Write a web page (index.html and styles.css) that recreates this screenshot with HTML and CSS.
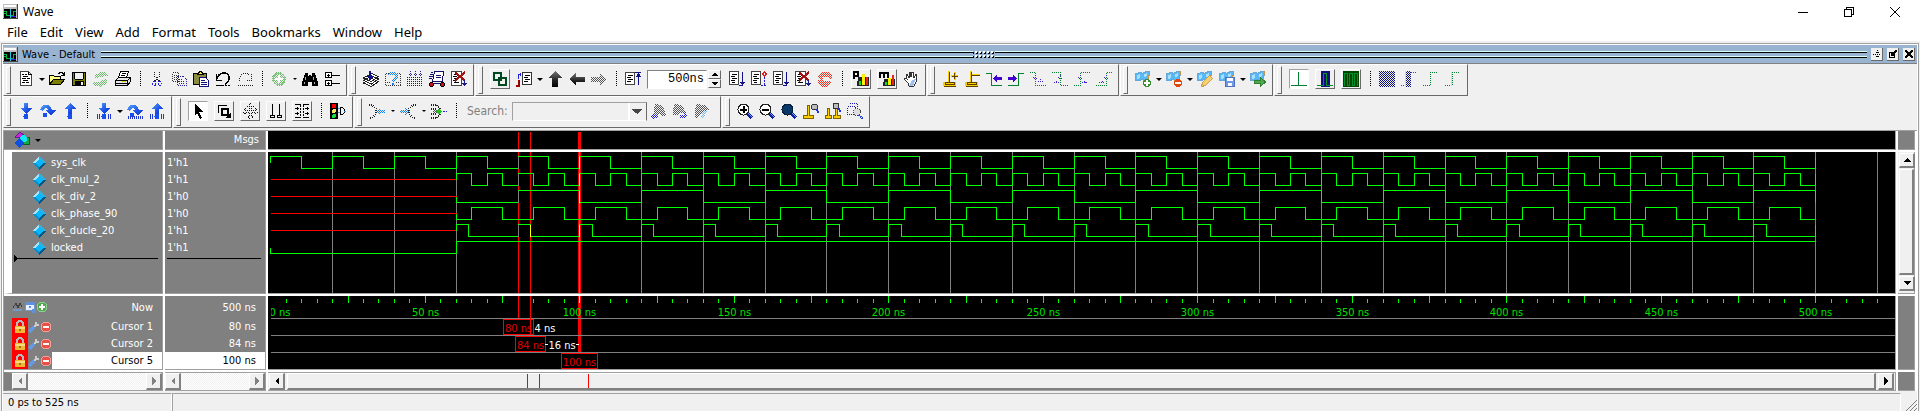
FILE: index.html
```html
<!DOCTYPE html>
<html lang="en">
<head>
    <meta charset="UTF-8">
    <meta name="viewport" content="width=device-width, initial-scale=1.0">
    <title>Wave</title>
    <link rel="stylesheet" href="styles.css">
</head>
<body>
    <!-- icon sprite -->
    <svg class="sprite" width="0" height="0" aria-hidden="true">
        <defs>
            <pattern id="dotGreen" width="2" height="2" patternUnits="userSpaceOnUse"><path fill="#6cba6c" d="M0 0h1v1H0zM1 1h1v1H1z"/></pattern>
            <pattern id="dotRed" width="2" height="2" patternUnits="userSpaceOnUse"><path fill="#f03020" d="M0 0h1v1H0zM1 1h1v1H1z"/></pattern>
            <pattern id="dotGray" width="2" height="2" patternUnits="userSpaceOnUse"><path fill="#555" d="M0 0h1v1H0zM1 1h1v1H1z"/></pattern>
            <pattern id="dotBlue" width="2" height="2" patternUnits="userSpaceOnUse"><path fill="#2020e0" d="M0 0h1v1H0zM1 1h1v1H1z"/></pattern>
            <pattern id="dotSky" width="2" height="2" patternUnits="userSpaceOnUse"><path fill="#1080f0" d="M0 0h1v1H0zM1 1h1v1H1z"/></pattern>
            <pattern id="dotNavy" width="2" height="2" patternUnits="userSpaceOnUse"><path fill="#10107a" d="M0 0h1v1H0zM1 1h1v1H1z"/></pattern>
            <linearGradient id="blueGrad" x1="0" y1="0" x2="1" y2="1"><stop offset="0" stop-color="#58a8f8"/><stop offset="0.6" stop-color="#1c50e8"/><stop offset="1" stop-color="#1030c0"/></linearGradient>
            <linearGradient id="blackGrad" x1="0" y1="0" x2="0" y2="1"><stop offset="0" stop-color="#777"/><stop offset="0.6" stop-color="#222"/><stop offset="1" stop-color="#000"/></linearGradient>
        </defs>
        <symbol id="app" viewBox="0 0 16 16"><path fill="#c0c0c0" d="M0 0h16v16H0z"/><path fill="#fff" d="M1 1h13v2H1z"/><path d="M1 5h13v10H1z"/><path fill="none" stroke="#00c040" d="M1 7.500h3v5h3M9 12.500h2v-5h3M1 10.500h2"/><path stroke="#20d0f0" d="M7.500 5v10"/><path stroke="#4020ff" d="M9 13.500h5"/><path stroke="#404040" d="M15.500 0v16M0 15.500h16"/></symbol>
        <symbol id="new" viewBox="0 0 16 16"><path fill="#fff" stroke="#444" d="M2.500.5h8l3 3v11h-11z"/><path stroke="#000" fill="none" d="M10.500.5v3h3M4 3.500h2M7 3.500h2M5 5.500h5M4 7.500h4M9 7.500h3M5 9.500h5M4 11.500h3M8 11.500h3"/></symbol>
        <symbol id="open" viewBox="0 0 16 16"><path fill="#ffff80" stroke="#000" d="M.5 13.500v-9h4l1 1h6v3"/><path fill="#808000" stroke="#000" d="M.5 13.500l4-5h11l-4 5z"/><path fill="none" stroke="#000" d="M9 2.500h1l1-1h2l2 2M15.500 1v4M12 4.500h3"/></symbol>
        <symbol id="save" viewBox="0 0 16 16"><path fill="#808000" stroke="#000" d="M1.500 1.500h13v13h-13z"/><path fill="#f0f0f0" d="M4 2h8v6H4z"/><path d="M4 10h9v5H4z"/><path fill="#f0f0f0" d="M10 11h2v3h-2z"/><path stroke="#000" d="M3.500 2v6M12.500 2v6M4 8.500h8"/></symbol>
        <symbol id="reload" viewBox="0 0 16 16"><path fill="url(#dotGreen)" d="M1 7l2-4h3l1-2 5 0 3 2v2h-4l-3 1-4 1zM15 9l-2 5h-3l-2 2-5-1-3-2 1-2h5l3-2 4-1z"/></symbol>
        <symbol id="print" viewBox="0 0 16 16"><path fill="#fff" stroke="#000" d="M5.500.5h8l-2 6h-8z"/><path stroke="#000" d="M7 2.500h4M6 4.500h4"/><path fill="#e8e8e8" stroke="#000" d="M.5 9.500l3-3h12v4l-3 4H.5z"/><path stroke="#000" fill="none" d="M0 9.500h12.500v5M12.500 9.500l3-3M1 12.500h11"/><path fill="#e0d000" d="M7 10h4v1H7z"/></symbol>
        <symbol id="cut" viewBox="0 0 16 16"><path fill="none" stroke="#222" stroke-dasharray="1 1" d="M5.500 1v4l5 5M10.500 1v4l-5 5"/><path fill="none" stroke="#2020e0" stroke-dasharray="2 1" d="M4.500 10.500h2v4h-2l-1-2zM9.500 10.500h2l1 3-1 1h-2z"/></symbol>
        <symbol id="copy" viewBox="0 0 16 16"><g fill="none" stroke-dasharray="1 1"><path stroke="#333" d="M1.500 1.500h6v9h-6zM3 4.500h4M3 6.500h4M3 8.500h4"/><path stroke="#2020a0" d="M6.500 5.500h6l3 3v6h-9zM8 8.500h4M8 10.500h6M8 12.500h6"/></g></symbol>
        <symbol id="paste" viewBox="0 0 16 16"><path fill="#8a8a40" stroke="#000" d="M.5 2.500h13v11H.5z"/><path fill="#f8e840" stroke="#000" d="M4.500 3.500v-1h1l1-2h2l1 2h1v1z"/><path fill="#fff" stroke="#101080" d="M6.500 6.500h6l3 3v6h-9z"/><path stroke="#101080" d="M8 9.500h4M8 11.500h6M8 13.500h6"/></symbol>
        <symbol id="undo" viewBox="0 0 16 16"><path fill="none" stroke="#000" stroke-width="1.500" d="M2 8c1-5 4-6 7-6s5 2 5 5-2 5-4 6"/><path stroke="#000" fill="none" d="M1.500 3v6h5M1 14.500h8M10 14.500h2M13 14.500h2"/></symbol>
        <symbol id="redo" viewBox="0 0 16 16"><g fill="none" stroke="#222" stroke-dasharray="1 1"><path d="M2.500 9.500v-3l3-4h5l3 3M14.500 3v6h-6M1 14.500h15"/></g></symbol>
        <symbol id="add" viewBox="0 0 16 16"><circle cx="8" cy="8" r="7" fill="url(#dotGreen)"/><circle cx="8" cy="8" r="6" fill="none" stroke="#8cc88c"/><path fill="#fff" d="M7 4h2v3h3v2H9v3H7V9H4V7h3z"/></symbol>
        <symbol id="find" viewBox="0 0 16 16"><path d="M3 2h3v3h1V4h2v1h1V2h3l1 4 2 5v4h-6v-4H6v4H0v-4l2-5z"/><path fill="#aaa" d="M3 6h1v3H3zM11 6h1v3h-1zM2 11h1v2H2zM12 11h1v2h-1z"/></symbol>
        <symbol id="tree" viewBox="0 0 16 16"><path fill="#fff" stroke="#000" d="M1.500 1.500h6v5h-6zM1.500 9.500h6v5h-6z"/><path stroke="#000" d="M3 4h3M4.500 3v3M3 12h3M4.500 11v3M8 4.500h8M8 12.500h8"/></symbol>
        <symbol id="compile" viewBox="0 0 16 16"><path fill="#fff" stroke="#222" d="M.5 12l8 3.500 7-5-7-3zM.5 9.500l8 3.500 7-5-7-3zM.5 7l8 3.500 7-5-7-3z"/><path fill="#10108a" d="M6 0h2v5h3l-4 4-4-4h3z"/></symbol>
        <symbol id="compileAsk" viewBox="0 0 16 16"><path fill="none" stroke="#333" stroke-dasharray="1 1" d="M.5 2.500h3M.5 2.500v12h15v-12h-3M2 11.500h3M11 11.500h3"/><path fill="none" stroke="url(#dotSky)" stroke-width="3" d="M4 4c0-2 8-3 8 1s-4 2-4 6"/><path fill="#1080f0" d="M7 12h2v2H7z"/></symbol>
        <symbol id="compileAll" viewBox="0 0 16 16"><path fill="none" stroke="#222" stroke-dasharray="1 1" d="M0 6.500h16M0 8.500h16M0 10.500h16M0 12.500h16M0 14.500h16"/><path fill="none" stroke="#2020a0" stroke-dasharray="1 1" d="M3.500 0v5M8.500 0v5M13.500 0v5M1.500 3.500h4M6.500 3.500h4M11.500 3.500h4"/></symbol>
        <symbol id="simulate" viewBox="0 0 16 16"><path fill="#fff" stroke="#10106a" d="M5.500.5h9l-1 10h-10z"/><path stroke="#10106a" d="M1 3.500h3M0 5.500h4M2 1.500h2M0 7.500h3M7 4.500h5M7 6.500h5M1 12.500h12"/><path fill="#c01020" stroke="#000" d="M1.500 11.500h2l1 1v2l-1 1h-2l-1-1v-2zM12.500 11.500h2l1 1v2l-1 1h-2l-1-1v-2z"/></symbol>
        <symbol id="break" viewBox="0 0 16 16"><path fill="#fff" stroke="#444" d="M.5.5h10v14H.5z"/><path stroke="#000" d="M3 3.500h5M2 5.500h4M3 7.500h5M2 9.500h4M3 11.500h5"/><path stroke="#a01010" stroke-width="2" d="M4 1l10 9M14 1L4 10"/><path fill="#1a1a8a" d="M13 9h1v3h2l-2.500 3-2.500-3h2z"/></symbol>
        <symbol id="link" viewBox="0 0 16 16"><path fill="none" stroke="#004820" stroke-width="2" d="M2 2h7v7H2zM7 7h7v7H7z"/></symbol>
        <symbol id="restart" viewBox="0 0 16 16"><path fill="#fff" stroke="#333" d="M6.500 1.500h9v12h-9z"/><path stroke="#000" d="M9 4.500h5M8 6.500h4M9 8.500h5M8 10.500h4"/><path fill="none" stroke="#2020e0" d="M2.500 8V3.500H5M4 2v3"/><path fill="none" stroke="#900" stroke-width="2" d="M0 15h3V9"/></symbol>
        <symbol id="up" viewBox="0 0 16 16"><path fill="url(#blackGrad)" d="M8 0l7 7h-4v9H5V7H1z"/></symbol>
        <symbol id="left" viewBox="0 0 16 16"><path fill="url(#blackGrad)" d="M0 8l7-6v4h9v5H7v4z"/></symbol>
        <symbol id="right" viewBox="0 0 16 16"><path fill="url(#dotGray)" d="M16 8L9 2v4H0v5h9v4z"/></symbol>
        <symbol id="runTop" viewBox="0 0 16 16"><path fill="#fff" stroke="#444" d="M.5 1.500h9v12h-9z"/><path stroke="#000" d="M3 4.500h5M2 6.500h4M3 8.500h5M2 10.500h4"/><path fill="none" stroke="#10108a" d="M10 1.500h6M13.500 2v12"/><path fill="#10108a" d="M13.500 2l3 4h-6z"/></symbol>
        <symbol id="run" viewBox="0 0 16 16"><path fill="#fff" stroke="#444" d="M.5.5h9v13h-9z"/><path stroke="#000" d="M3 3.500h5M2 5.500h4M3 7.500h5M2 9.500h4M3 11.500h3"/><path fill="#10108a" d="M13 1h1v10h2l-2.500 4-2.500-4h2zM10 14h3v1h-3z"/></symbol>
        <symbol id="runCont" viewBox="0 0 16 16"><path fill="#fff" stroke="#444" d="M.5.5h9v13h-9z"/><path stroke="#000" d="M3 3.500h5M2 5.500h4M3 7.500h5M2 9.500h4M3 11.500h3"/><path fill="none" stroke="#e02020" d="M13.500 1l2 2-2 2-2-2z"/><path stroke="#2020c0" stroke-dasharray="2 1" d="M13.500 6v9M10 14.500h6"/></symbol>
        <symbol id="stop" viewBox="0 0 16 16"><path fill="url(#dotRed)" d="M4 1h8l3 4v3h-3v-2H6v4h8v2l-3 4H4l-3-4V9h2V7H1V4z"/></symbol>
        <symbol id="perfP" viewBox="0 0 16 16"><path d="M0 0h6v6H2v2H0zM2 2v2h2V2z" fill-rule="evenodd"/><path fill="#222" d="M5 6h11v9H4v-5h1z"/><path fill="#10e020" d="M6 10h2v4H6z"/><path fill="#f8f000" d="M9 3h3v11H9z"/><path fill="#f02020" d="M13 6h2v8h-2z"/></symbol>
        <symbol id="perfM" viewBox="0 0 16 16"><path d="M0 1h9l1 1v5H8V3H6v4H4V3H2v4H0z"/><path fill="#222" d="M5 8h11v7H4z"/><path fill="#10e020" d="M6 11h2v3H6z"/><path fill="#f8f000" d="M9 7h3v7H9z"/><path fill="#f02020" d="M13 4h2v10h-2z"/></symbol>
        <symbol id="hand" viewBox="0 0 16 16"><path fill="#fff" stroke="#333" d="M6 15l-1-3-4-4V7l3 1-1-5h1l2 4V1h1l1 5 1-5h1l1 6 2-4h1l-1 8-2 4z"/><path fill="#a0c0f0" d="M9 9l4-1-3 7-4 0z"/></symbol>
        <symbol id="curAdd" viewBox="0 0 16 16"><path fill="#f8d000" d="M6 0h2v11h6v4H1v-4h5zM9 4h3V1h2v3h2v2h-2v3h-2V6H9z"/><path fill="none" stroke="#604000" d="M7.500 1v10M10 5.500h6M12.500 2v6M3 13.500h9v-2H3zM2 15.500h12"/></symbol>
        <symbol id="curDel" viewBox="0 0 16 16"><path fill="#f8d000" d="M6 0h2v11h6v4H1v-4h5zM8 3h8v1H8z"/><path fill="none" stroke="#604000" d="M7.500 1v10M8 4.500h8M3 13.500h9v-2H3zM2 15.500h12"/></symbol>
        <symbol id="prevEdge" viewBox="0 0 16 16"><path fill="none" stroke="#008030" d="M0 2.500h5.500v12H16"/><path fill="#4000d0" d="M7 7.500L11 4v2h5v3h-5v2z"/></symbol>
        <symbol id="nextEdge" viewBox="0 0 16 16"><path fill="none" stroke="#008030" d="M0 14.500h10.500v-12H16"/><path fill="#4000d0" d="M9 7.500L5 4v2H0v3h5v2z"/></symbol>
        <symbol id="edgeA" viewBox="0 0 16 16"><path fill="none" stroke="#008030" stroke-dasharray="1 1" d="M0 1.500h5.500v13H16"/><path fill="none" stroke="#4020d0" stroke-dasharray="1 1" d="M5.500 4l2 3h-4zM8 10.500h5M10.500 8l2 2.500"/></symbol>
        <symbol id="edgeB" viewBox="0 0 16 16"><path fill="none" stroke="#008030" stroke-dasharray="1 1" d="M0 1.500h8.500v13H16"/><path fill="none" stroke="#4020d0" stroke-dasharray="1 1" d="M8.500 4l2 3h-4zM2 11.500h5M4.500 10l2 2"/></symbol>
        <symbol id="edgeC" viewBox="0 0 16 16"><path fill="none" stroke="#008030" stroke-dasharray="1 1" d="M16 1.500H6.500v13H0"/><path fill="none" stroke="#4020d0" stroke-dasharray="1 1" d="M6.500 4l2 3h-4zM8 11.500h5M10 10l2 2"/></symbol>
        <symbol id="edgeD" viewBox="0 0 16 16"><path fill="none" stroke="#008030" stroke-dasharray="1 1" d="M16 1.500h-5.500v13H0"/><path fill="none" stroke="#4020d0" stroke-dasharray="1 1" d="M10.500 4l2 3h-4zM3 11.500h5M6 10l2 2"/></symbol>
        <symbol id="wavePic" viewBox="0 0 16 16"><path fill="#58b8f8" stroke="#68a8d8" d="M.5 2.500l5-1 2 1 4-2h3l-1 8-4 1-2-1-4 1H.5z"/><path fill="#a8e0ff" d="M2 4l3-1v4l-3 1zM9 3l3-1v3l-3 1z"/><path fill="none" stroke="#c89040" d="M15 0l-2 9-5 1"/></symbol>
        <symbol id="bmAdd" viewBox="0 0 16 16"><use href="#wavePic"/><circle cx="12" cy="12" r="4" fill="#3a8a30"/><path fill="#fff" d="M11 9h2v2h2v2h-2v2h-2v-2H9v-2h2z"/></symbol>
        <symbol id="bmDel" viewBox="0 0 16 16"><use href="#wavePic"/><circle cx="12" cy="12" r="4" fill="#e04810"/><path fill="#fff" d="M9 11h6v2H9z"/></symbol>
        <symbol id="bmEdit" viewBox="0 0 16 16"><use href="#wavePic"/><path fill="#f8d070" stroke="#c8a050" d="M4.500 15.500l1-4 7-7 3 3-7 7z"/></symbol>
        <symbol id="bmSave" viewBox="0 0 16 16"><use href="#wavePic"/><path fill="#7098e8" stroke="#5070c0" d="M6.500 6.500h9v9h-9z"/><path fill="#fff" d="M8 7h6v3H8zM9 12h4v3H9z"/></symbol>
        <symbol id="bmGo" viewBox="0 0 16 16"><use href="#wavePic"/><path fill="#50a850" stroke="#308030" d="M4.500 9.500h6v-3l5 4.500-5 4.500v-3h-6z"/></symbol>
        <symbol id="litA" viewBox="0 0 16 16"><path fill="none" stroke="#008030" d="M0 14.500h16M7.500 1v13"/></symbol>
        <symbol id="litB" viewBox="0 0 16 16"><path fill="#101078" d="M4 0h9v16H4z"/><path fill="none" stroke="#00902c" d="M0 14.500h6.500v-12h3v12H16"/></symbol>
        <symbol id="litC" viewBox="0 0 16 16"><path fill="#004800" d="M0 0h16v16H0z"/><path fill="none" stroke="#009030" d="M1 15V2.500h3.500v12h2v-12h3v12h2v-12h3V15"/></symbol>
        <symbol id="expA" viewBox="0 0 16 16"><path fill="url(#dotNavy)" d="M0 0h16v16H0z"/></symbol>
        <symbol id="expB" viewBox="0 0 16 16"><path fill="url(#dotNavy)" d="M5 0h5v16H5z"/><path fill="none" stroke="#008030" stroke-dasharray="1 1" d="M0 14.500h4.500M10 1.500h5"/><path stroke="#f8f000" d="M4.500 0v15"/></symbol>
        <symbol id="expC" viewBox="0 0 16 16"><path fill="none" stroke="#008030" stroke-dasharray="1 1" d="M0 14.500h7.500v-13H15"/></symbol>
        <symbol id="expD" viewBox="0 0 16 16"><path fill="none" stroke="#008030" stroke-dasharray="1 1" d="M0 14.500h7.500v-13H15"/><path stroke="#f8f000" d="M6.500 1v14"/></symbol>
        <symbol id="stepIn" viewBox="0 0 16 16"><path fill="url(#blueGrad)" d="M6 0h4v5h4l-6 6-6-6h4z"/><circle cx="8" cy="13.500" r="2.500" fill="#1850f0"/></symbol>
        <symbol id="stepOver" viewBox="0 0 16 16"><path fill="url(#blueGrad)" d="M0 7c1-6 10-8 12 0h4l-5 6-6-6h3c-1-3-5-2-5 1z"/><circle cx="5" cy="12" r="2.500" fill="#1850f0"/></symbol>
        <symbol id="stepOut" viewBox="0 0 16 16"><path fill="url(#blueGrad)" d="M8 0l6 6h-4v5H6V6H2z"/><circle cx="8" cy="13.500" r="2.500" fill="#1850f0"/></symbol>
        <symbol id="bars" viewBox="0 0 16 16"><path stroke="#2038d0" d="M1.500 11v5M3.500 11v5M12.500 11v5M14.500 11v5"/></symbol>
        <symbol id="stepInC" viewBox="0 0 16 16"><use href="#stepIn"/><use href="#bars"/></symbol>
        <symbol id="stepOverC" viewBox="0 0 16 16"><use href="#stepOver"/><path stroke="#2038d0" stroke-dasharray="1 1" stroke-width="3" d="M1 14.500h15"/></symbol>
        <symbol id="stepOutC" viewBox="0 0 16 16"><use href="#stepOut"/><use href="#bars"/></symbol>
        <symbol id="select" viewBox="0 0 16 16"><path d="M5 1l8 8H9l3 6-2 1-3-6-2 2z"/></symbol>
        <symbol id="zoomMode" viewBox="0 0 16 16"><path fill="none" stroke="#000" d="M2.500 10V2.500H11"/><path fill="none" stroke="#000" stroke-width="2" d="M6 6h6v6H6z"/><path d="M15 9v6H9zM10 10l1-1 4 4-1 1z"/></symbol>
        <symbol id="pan" viewBox="0 0 16 16"><path fill="none" stroke="#111" stroke-dasharray="1 1" d="M8.500 0l3 3.500h-2v4h4v-2l3 3-3 3v-2h-4v4h2l-3 3-3-3h2v-4h-4v2l-3-3 3-3v2h4v-4h-2z"/></symbol>
        <symbol id="twoCur" viewBox="0 0 16 16"><path fill="none" stroke="#000" d="M4.500 1v11M11.500 1v11M2.500 12.500h4v2h-4zM9.500 12.500h4v2h-4z"/></symbol>
        <symbol id="edit" viewBox="0 0 16 16"><path fill="none" stroke="#000" stroke-dasharray="2 1" d="M6.500 2v13M9.500 2v13"/><path stroke="#000" d="M1 1.500h6M9 1.500h6M1 14.500h6M9 14.500h6M1 5.500h4M3 4v3M11 5.500h4M13 4v3M1 10.500h4M3 9v3M11 10.500h4M13 9v3"/></symbol>
        <symbol id="traffic" viewBox="0 0 16 16"><path d="M0 0h8v16H0z"/><circle cx="4" cy="3" r="2.500" fill="#f00"/><circle cx="4" cy="8" r="2" fill="#f8e860"/><circle cx="4" cy="13" r="2" fill="#10e040"/><path fill="none" stroke="#000" d="M10.500 4.500h2l2 2v3l-2 2h-2z"/><path stroke="#30a0f0" d="M8 5.500h2M8 9.500h2M14 8.500h2"/></symbol>
        <symbol id="merge" viewBox="0 0 16 16"><path fill="none" stroke="#222" stroke-dasharray="1 1" stroke-width="2" d="M0 2h3l4 4v5l-4 4H0"/><path fill="url(#dotSky)" d="M7 8.500L11 5v2h5v3h-5v2z"/></symbol>
        <symbol id="split" viewBox="0 0 16 16"><path fill="none" stroke="#222" stroke-dasharray="1 1" stroke-width="2" d="M16 2h-3L9 6v5l4 4h3"/><path fill="url(#dotSky)" d="M9 8.500L5 5v2H0v3h5v2z"/></symbol>
        <symbol id="gate" viewBox="0 0 16 16"><path fill="none" stroke="#222" stroke-dasharray="1 1" stroke-width="2" d="M0 2h6l3 4M0 15h6l3-4M0 6h5M0 11h5"/><path fill="url(#dotGray)" d="M2 7h4v3H2z"/><path fill="#20c020" d="M8 5l3 3.500-3 3-3-3z"/><path stroke="#2020e0" stroke-dasharray="2 1" d="M12 8.500h4"/></symbol>
        <symbol id="findPrev" viewBox="0 0 16 16"><path fill="url(#dotGray)" d="M5 1h3l1 1h3l4 9v2h-5l-1-3H9l-1 2H4V7z"/><path fill="url(#dotBlue)" d="M0 13l4-3v2h4v3H4v1z"/></symbol>
        <symbol id="findNext" viewBox="0 0 16 16"><path fill="url(#dotGray)" d="M3 1h3l1 1h3l4 8H9L8 9 6 12H1V7z"/><path fill="url(#dotBlue)" d="M16 13l-4-3v2H8v3h4v1z"/></symbol>
        <symbol id="findOpt" viewBox="0 0 16 16"><path fill="url(#dotGray)" d="M3 1h3l1 1h5l3 5-4 1-4 3-3 4H1V7z"/><path fill="url(#dotSky)" d="M6 14l4-6 3 0-4 8z" opacity=".5"/></symbol>
        <symbol id="lens" viewBox="0 0 16 16"><path stroke="#1020a0" stroke-width="3" d="M10 10l5 5"/><path stroke="#70a0ff" d="M11 10l4 4"/><circle cx="6.500" cy="6.500" r="5.500" fill="#fff" stroke="#222"/></symbol>
        <symbol id="zoomIn" viewBox="0 0 16 16"><use href="#lens"/><path d="M6 3h2v3h2v2H8v2H6V8H3V6h3z"/></symbol>
        <symbol id="zoomOut" viewBox="0 0 16 16"><use href="#lens"/><path d="M3 6h7v2H3z"/></symbol>
        <symbol id="zoomFull" viewBox="0 0 16 16"><use href="#lens"/><circle cx="6.500" cy="6.500" r="5.500" fill="#083868" stroke="#082040"/></symbol>
        <symbol id="zoomCur" viewBox="0 0 16 16"><path fill="#f8d000" stroke="#806000" d="M.5 12.500h4v-10h2v10h4v3H.5z"/><circle cx="11.500" cy="4" r="3" fill="#bbb" stroke="#333"/><path stroke="#2030e0" stroke-width="2" d="M14 6l1 4"/></symbol>
        <symbol id="zoomTwo" viewBox="0 0 16 16"><path fill="#f8d000" stroke="#806000" d="M.5 12.500h2v-7h2v7h2v3h-6zM8.500 12.500h2v-7h2v7h3v3h-7z"/><circle cx="11" cy="3" r="3" fill="#bbb" stroke="#333"/><path stroke="#2030e0" stroke-width="2" d="M14 5l1 4"/></symbol>
        <symbol id="zoomArea" viewBox="0 0 16 16"><path fill="none" stroke="#1818b0" stroke-dasharray="1 1" d="M.5 3.500h8v8h-8zM2.500.5h8v8"/><circle cx="10" cy="9" r="3.500" fill="#ddd" stroke="#444" stroke-dasharray="1 1"/><path stroke="#2040d0" stroke-width="2" stroke-dasharray="1 1" d="M12 12l4 4"/></symbol>
        <symbol id="gem" viewBox="0 0 14 14"><path fill="#0890d0" d="M7 0l7 7-7 7-7-7z"/><path fill="#a8e4f8" d="M7 0v3L3 7H0z"/><path fill="#30b0e0" d="M7 0v3l4 4h3z"/><path fill="#045880" d="M7 14v-3l4-4h3z"/><path fill="#08b8ff" d="M7 3l4 4-4 4-4-4z"/></symbol>
        <symbol id="shapes" viewBox="0 0 16 16"><path fill="#d020e0" stroke="#602080" d="M1 5l5-5 4 3-5 3z"/><path fill="#18a848" stroke="#086020" d="M9.500 5.500h6v7h-6z"/><circle cx="9.500" cy="6.500" r="3.500" fill="#10e8f8"/><path fill="#1050e0" d="M5 6l5 5-5 5-5-5z"/></symbol>
        <symbol id="lock" viewBox="0 0 16 16"><path fill="none" stroke="#b8b8b8" stroke-width="2" d="M5 8V5c0-3 6-3 6 0v3"/><path fill="#f0b830" d="M3 7h10v7H3z"/><path fill="#f8dc80" d="M3 8h10v2H3z"/><path fill="#a87010" d="M7 10h2v2H7z"/></symbol>
        <symbol id="wrench" viewBox="0 0 12 12"><path stroke="#6898e0" stroke-width="3" d="M1 11l5-5"/><path fill="none" stroke="#ccc" stroke-width="2" d="M6 6l2-2V1M8 4h3"/></symbol>
        <symbol id="minus" viewBox="0 0 12 12"><circle cx="6" cy="6" r="5" fill="#e85048" stroke="#f8a098"/><path fill="#fff" d="M3 5h6v2H3z"/></symbol>
        <symbol id="plus" viewBox="0 0 12 12"><circle cx="6" cy="6" r="5" fill="#50a850" stroke="#90d090"/><path fill="#fff" d="M5 3h2v2h2v2H7v2H5V7H3V5h2z"/></symbol>
        <symbol id="textTool" viewBox="0 0 12 12"><path fill="none" stroke="#404040" d="M1 7l3-5 2 5 2-5 2 4"/><path stroke="#7098c8" stroke-width="2" d="M1 9h9"/></symbol>
        <symbol id="grid" viewBox="0 0 12 12"><path fill="#e8f0ff" stroke="#7098d0" d="M1.500 1.500h9v8h-9z"/><path fill="#6090d8" d="M1 1h10v3H1zM5 5h2v2H5zM8 8h4v4H8z"/></symbol>
        <symbol id="arrowL" viewBox="0 0 8 8"><path fill="currentColor" d="M6 0v8L2 4z"/></symbol>
        <symbol id="arrowR" viewBox="0 0 8 8"><path fill="currentColor" d="M2 0v8l4-4z"/></symbol>
        <symbol id="arrowU" viewBox="0 0 8 8"><path fill="currentColor" d="M0 6h8L4 2z"/></symbol>
        <symbol id="arrowD" viewBox="0 0 8 8"><path fill="currentColor" d="M0 2h8L4 6z"/></symbol>
    </svg>

    <header class="titlebar">
        <svg class="app-icon"><use href="#app"/></svg>
        <span>Wave</span>
        <div class="window-buttons">
            <button aria-label="Minimize"><svg width="10" height="10"><path stroke="#000" d="M0 5.500h10"/></svg></button>
            <button aria-label="Restore"><svg width="10" height="10"><path fill="none" stroke="#000" d="M.5 2.500h7v7h-7zM2.500 2.500v-2h7v7h-2"/></svg></button>
            <button aria-label="Close"><svg class="smooth" width="10" height="10"><path stroke="#000" d="M0 0l10 10M10 0L0 10"/></svg></button>
        </div>
    </header>

    <nav class="menubar">
        <button>File</button>
        <button>Edit</button>
        <button>View</button>
        <button>Add</button>
        <button>Format</button>
        <button>Tools</button>
        <button>Bookmarks</button>
        <button>Window</button>
        <button>Help</button>
    </nav>

    <main class="wave-window">
        <div class="pane-title">
            <svg class="app-icon"><use href="#app"/></svg>
            <span>Wave - Default</span>
            <div class="drag-bar"><i class="drag-grip"></i></div>
            <button aria-label="Undock"><svg width="8" height="8"><path stroke="#000" stroke-dasharray="1 1" d="M4.500 0v8M0 4.500h8M2.500 2.500h4M2.500 6.500h4"/></svg></button>
            <button aria-label="Zoom pane"><svg width="8" height="8"><path fill="none" stroke="#000" d="M3 2.500H.5v5h5V5"/><path stroke="#000" stroke-width="2" d="M8 0L3 5M3 2v3h3"/></svg></button>
            <button aria-label="Close pane"><svg width="8" height="8"><path stroke="#000" stroke-width="2" d="M0 0l8 8M8 0L0 8"/></svg></button>
        </div>

        <div class="toolbars">
            <div class="toolbar-row">
                <div class="toolbar">
                    <button class="tool" aria-label="New"><svg><use href="#new"/></svg></button><button class="caret" aria-label="New options"></button>
                    <button class="tool" aria-label="Open"><svg><use href="#open"/></svg></button>
                    <button class="tool" aria-label="Save"><svg><use href="#save"/></svg></button>
                    <button class="tool" aria-label="Reload"><svg><use href="#reload"/></svg></button>
                    <button class="tool" aria-label="Print"><svg><use href="#print"/></svg></button>
                    <i class="sep"></i>
                    <button class="tool" aria-label="Cut"><svg><use href="#cut"/></svg></button>
                    <button class="tool" aria-label="Copy"><svg><use href="#copy"/></svg></button>
                    <button class="tool" aria-label="Paste"><svg><use href="#paste"/></svg></button>
                    <button class="tool" aria-label="Undo"><svg><use href="#undo"/></svg></button>
                    <button class="tool" aria-label="Redo"><svg><use href="#redo"/></svg></button>
                    <i class="sep"></i>
                    <button class="tool" aria-label="Add"><svg><use href="#add"/></svg></button><button class="caret small" aria-label="Add options"></button>
                    <button class="tool" aria-label="Find"><svg><use href="#find"/></svg></button>
                    <button class="tool" aria-label="Collapse all"><svg><use href="#tree"/></svg></button>
                </div>
                <div class="toolbar">
                    <button class="tool" aria-label="Compile"><svg><use href="#compile"/></svg></button>
                    <button class="tool" aria-label="Compile out-of-date"><svg><use href="#compileAsk"/></svg></button>
                    <button class="tool" aria-label="Compile all"><svg><use href="#compileAll"/></svg></button>
                    <button class="tool" aria-label="Simulate"><svg><use href="#simulate"/></svg></button>
                    <button class="tool" aria-label="Break"><svg><use href="#break"/></svg></button>
                </div>
                <div class="toolbar">
                    <button class="tool raised" aria-label="Link"><svg><use href="#link"/></svg></button>
                    <button class="tool" aria-label="Restart"><svg><use href="#restart"/></svg></button><button class="caret" aria-label="Restart options"></button>
                    <button class="tool" aria-label="Up"><svg><use href="#up"/></svg></button>
                    <button class="tool" aria-label="Back"><svg><use href="#left"/></svg></button>
                    <button class="tool" aria-label="Forward"><svg><use href="#right"/></svg></button>
                    <i class="sep"></i>
                    <button class="tool" aria-label="Restart simulation"><svg><use href="#runTop"/></svg></button>
                    <input class="run-length" type="text" value="500ns" aria-label="Run length">
                    <div class="spin">
                        <button aria-label="Increase"><svg><use href="#arrowU"/></svg></button>
                        <button aria-label="Decrease"><svg><use href="#arrowD"/></svg></button>
                    </div>
                    <button class="tool" aria-label="Run"><svg><use href="#run"/></svg></button>
                    <button class="tool" aria-label="Continue"><svg><use href="#runCont"/></svg></button>
                    <button class="tool" aria-label="Run all"><svg><use href="#run"/></svg></button>
                    <button class="tool" aria-label="Break run"><svg><use href="#break"/></svg></button>
                    <button class="tool" aria-label="Stop"><svg><use href="#stop"/></svg></button>
                    <i class="sep"></i>
                    <button class="tool raised" aria-label="Performance profiling"><svg><use href="#perfP"/></svg></button>
                    <button class="tool raised" aria-label="Memory profiling"><svg><use href="#perfM"/></svg></button>
                    <button class="tool" aria-label="Hand"><svg><use href="#hand"/></svg></button>
                </div>
                <div class="toolbar">
                    <button class="tool" aria-label="Insert cursor"><svg><use href="#curAdd"/></svg></button>
                    <button class="tool" aria-label="Delete cursor"><svg><use href="#curDel"/></svg></button>
                    <button class="tool" aria-label="Previous transition"><svg><use href="#prevEdge"/></svg></button>
                    <button class="tool" aria-label="Next transition"><svg><use href="#nextEdge"/></svg></button>
                    <button class="tool" aria-label="Previous falling edge"><svg><use href="#edgeA"/></svg></button>
                    <button class="tool" aria-label="Next falling edge"><svg><use href="#edgeB"/></svg></button>
                    <button class="tool" aria-label="Previous rising edge"><svg><use href="#edgeC"/></svg></button>
                    <button class="tool" aria-label="Next rising edge"><svg><use href="#edgeD"/></svg></button>
                </div>
                <div class="toolbar">
                    <button class="tool" aria-label="Add bookmark"><svg><use href="#bmAdd"/></svg></button><button class="caret" aria-label="Add bookmark options"></button>
                    <button class="tool" aria-label="Delete bookmark"><svg><use href="#bmDel"/></svg></button><button class="caret" aria-label="Delete bookmark options"></button>
                    <button class="tool" aria-label="Edit bookmark"><svg><use href="#bmEdit"/></svg></button>
                    <button class="tool" aria-label="Save bookmarks"><svg><use href="#bmSave"/></svg></button><button class="caret" aria-label="Save bookmarks options"></button>
                    <button class="tool" aria-label="Go to bookmark"><svg><use href="#bmGo"/></svg></button>
                </div>
                <div class="toolbar">
                    <button class="tool raised pressed" aria-label="Deltas off"><svg><use href="#litA"/></svg></button>
                    <button class="tool raised" aria-label="Expand deltas"><svg><use href="#litB"/></svg></button>
                    <button class="tool raised" aria-label="Expand events"><svg><use href="#litC"/></svg></button>
                    <i class="sep"></i>
                    <button class="tool" aria-label="Expand all"><svg><use href="#expA"/></svg></button>
                    <button class="tool" aria-label="Expand at cursor"><svg><use href="#expB"/></svg></button>
                    <button class="tool" aria-label="Collapse all time"><svg><use href="#expC"/></svg></button>
                    <button class="tool" aria-label="Collapse at cursor"><svg><use href="#expD"/></svg></button>
                </div>
            </div>
            <div class="toolbar-row">
                <div class="toolbar">
                    <button class="tool" aria-label="Step into"><svg><use href="#stepIn"/></svg></button>
                    <button class="tool" aria-label="Step over"><svg><use href="#stepOver"/></svg></button>
                    <button class="tool" aria-label="Step out"><svg><use href="#stepOut"/></svg></button>
                    <i class="sep"></i>
                    <button class="tool" aria-label="Step into current"><svg><use href="#stepInC"/></svg></button><button class="caret" aria-label="Step options"></button>
                    <button class="tool" aria-label="Step over current"><svg><use href="#stepOverC"/></svg></button>
                    <button class="tool" aria-label="Step out current"><svg><use href="#stepOutC"/></svg></button>
                </div>
                <div class="toolbar">
                    <button class="tool raised pressed" aria-label="Select mode"><svg><use href="#select"/></svg></button>
                    <button class="tool raised" aria-label="Zoom mode"><svg><use href="#zoomMode"/></svg></button>
                    <button class="tool raised" aria-label="Pan mode"><svg><use href="#pan"/></svg></button>
                    <button class="tool raised" aria-label="Two cursor mode"><svg><use href="#twoCur"/></svg></button>
                    <button class="tool raised" aria-label="Edit mode"><svg><use href="#edit"/></svg></button>
                    <i class="sep"></i>
                    <button class="tool" aria-label="Stop drawing"><svg><use href="#traffic"/></svg></button>
                </div>
                <div class="toolbar search">
                    <button class="tool" aria-label="Trace drivers"><svg><use href="#merge"/></svg></button><button class="caret small" aria-label="Driver options"></button>
                    <button class="tool" aria-label="Trace readers"><svg><use href="#split"/></svg></button><button class="caret small" aria-label="Reader options"></button>
                    <button class="tool" aria-label="Trace gate"><svg><use href="#gate"/></svg></button>
                    <i class="sep"></i>
                    <label class="search-label" for="search">Search:</label>
                    <select class="search-box" id="search" disabled><option></option></select>
                    <button class="tool" aria-label="Search reverse"><svg><use href="#findPrev"/></svg></button>
                    <button class="tool" aria-label="Search forward"><svg><use href="#findNext"/></svg></button>
                    <button class="tool" aria-label="Search options"><svg><use href="#findOpt"/></svg></button>
                </div>
                <div class="toolbar">
                    <button class="tool" aria-label="Zoom in"><svg><use href="#zoomIn"/></svg></button>
                    <button class="tool" aria-label="Zoom out"><svg><use href="#zoomOut"/></svg></button>
                    <button class="tool" aria-label="Zoom full"><svg><use href="#zoomFull"/></svg></button>
                    <button class="tool" aria-label="Zoom in on active cursor"><svg><use href="#zoomCur"/></svg></button>
                    <button class="tool" aria-label="Zoom between cursors"><svg><use href="#zoomTwo"/></svg></button>
                    <button class="tool" aria-label="Zoom other window"><svg><use href="#zoomArea"/></svg></button>
                </div>
            </div>
        </div>

        <div class="wave-grid">
            <!-- header row -->
            <div class="cell names-head"><svg class="icon16"><use href="#shapes"/></svg><button class="caret" aria-label="Filter"></button></div>
            <div class="cell msgs-head">Msgs</div>
            <div class="cell black"><svg id="topPane"></svg></div>
            <div class="cell"></div>

            <!-- signals -->
            <div class="cell names">
                <ul>
                    <li><svg><use href="#gem"/></svg>sys_clk</li>
                    <li><svg><use href="#gem"/></svg>clk_mul_2</li>
                    <li><svg><use href="#gem"/></svg>clk_div_2</li>
                    <li><svg><use href="#gem"/></svg>clk_phase_90</li>
                    <li><svg><use href="#gem"/></svg>clk_ducle_20</li>
                    <li><svg><use href="#gem"/></svg>locked</li>
                </ul>
                <div class="insert-line"><svg width="4" height="7"><path fill="none" stroke="#000" d="M.5 0v7M0 .5l3 3-3 3"/></svg></div>
            </div>
            <div class="cell values">
                <ul>
                    <li>1'h1</li>
                    <li>1'h1</li>
                    <li>1'h0</li>
                    <li>1'h0</li>
                    <li>1'h1</li>
                    <li>1'h1</li>
                </ul>
                <div class="insert-line"></div>
            </div>
            <div class="cell black"><svg id="wavePane"></svg></div>
            <div class="cell vscroll">
                <button aria-label="Scroll up"><svg><use href="#arrowU"/></svg></button>
                <div class="thumb"></div>
                <button aria-label="Scroll down"><svg><use href="#arrowD"/></svg></button>
            </div>

            <!-- cursors -->
            <div class="cell cursors">
                <div class="now"><svg><use href="#textTool"/></svg><svg><use href="#grid"/></svg><svg><use href="#plus"/></svg><span>Now</span></div>
                <div class="cursor"><svg class="lock"><use href="#lock"/></svg><svg><use href="#wrench"/></svg><svg><use href="#minus"/></svg><span>Cursor 1</span></div>
                <div class="cursor"><svg class="lock"><use href="#lock"/></svg><svg><use href="#wrench"/></svg><svg><use href="#minus"/></svg><span>Cursor 2</span></div>
                <div class="cursor active"><svg class="lock"><use href="#lock"/></svg><svg><use href="#wrench"/></svg><svg><use href="#minus"/></svg><span>Cursor 5</span></div>
            </div>
            <div class="cell times">
                <div class="now"><span>500 ns</span></div>
                <div class="cursor"><span>80 ns</span></div>
                <div class="cursor"><span>84 ns</span></div>
                <div class="cursor active"><span>100 ns</span></div>
            </div>
            <div class="cell black"><svg id="rulerPane"></svg></div>
            <div class="cell"></div>

            <!-- scroll bars -->
            <div class="cell hscroll idle names-scroll">
                <button aria-label="Scroll names left" disabled><svg><use href="#arrowL"/></svg></button>
                <div class="track"></div>
                <button aria-label="Scroll names right" disabled><svg><use href="#arrowR"/></svg></button>
            </div>
            <div class="cell hscroll idle">
                <button aria-label="Scroll values left" disabled><svg><use href="#arrowL"/></svg></button>
                <div class="track"></div>
                <button aria-label="Scroll values right" disabled><svg><use href="#arrowR"/></svg></button>
            </div>
            <div class="cell hscroll wave-scroll">
                <button aria-label="Scroll waves left"><svg><use href="#arrowL"/></svg></button>
                <div class="thumb"><svg id="scrollMarks"></svg></div>
                <button aria-label="Scroll waves right"><svg><use href="#arrowR"/></svg></button>
            </div>
            <div class="cell"></div>
        </div>

        <footer class="statusbar">
            <div class="status-range">0 ps to 525 ns</div>
            <div class="status-text"></div>
            <svg class="size-grip" width="12" height="12"><path stroke="#808080" d="M1 12L12 1M5 12l7-7M9 12l3-3"/></svg>
        </footer>
    </main>
    <script src="wave.js"></script>
</body>
</html>
```
FILE: styles.css
```css
* {
    box-sizing: border-box;
}
body {
    margin: 0;
    min-height: 100vh;
    display: flex;
    flex-direction: column;
    background-color: #f0f0f0;
    color: #000;
    font-family: "DejaVu Sans Condensed", "Noto Sans", sans-serif;
    font-size: 11px;
    line-height: 17px;
}
button {
    padding: 0;
    border: none;
    background: none;
    color: inherit;
    font: inherit;
}
svg {
    display: block;
    flex: none;
    shape-rendering: crispEdges;
}
svg.smooth {
    shape-rendering: auto;
}
ul {
    margin: 0;
    padding: 0;
    list-style: none;
}
.sprite {
    position: absolute;
}
.app-icon {
    width: 15px;
    height: 15px;
}
.icon16 {
    width: 16px;
    height: 16px;
}

/* title and menu */
.titlebar {
    display: flex;
    align-items: center;
    gap: 5px;
    height: 23px;
    padding-left: 3px;
    background-color: #fff;
    font-family: "Noto Sans", sans-serif;
    font-size: 12px;
}
.window-buttons {
    display: flex;
    margin-left: auto;
    padding-right: 2px;
}
.window-buttons button {
    display: flex;
    align-items: center;
    justify-content: center;
    width: 46px;
    height: 20px;
}
.menubar {
    display: flex;
    height: 18px;
    padding-left: 1px;
    background-color: #fff;
    font-family: "Noto Sans", sans-serif;
    font-size: 13px;
}
.menubar button {
    padding: 0 6px;
}

/* docked wave window */
.wave-window {
    flex: 1;
    display: flex;
    flex-direction: column;
    margin: 2px 1px 0;
    border: 1px solid #a0a0a0;
    border-bottom: none;
    padding: 1px 1px 0;
    background-color: #fff;
}
.pane-title {
    display: flex;
    align-items: center;
    gap: 4px;
    height: 19px;
    padding-right: 2px;
    border-bottom: 1px solid #808080;
    background-color: #99b4d1;
}
.pane-title button {
    display: flex;
    align-items: center;
    justify-content: center;
    width: 12px;
    height: 13px;
    border-right: 1px solid #696969;
    border-bottom: 1px solid #696969;
    background-color: #f0f0f0;
}
.drag-bar {
    flex: 1;
    display: flex;
    justify-content: center;
    height: 7px;
    margin-left: 2px;
    background: linear-gradient(#e0ffff 0 1px, #000 1px 2px, #99b4d1 2px 5px, #e0ffff 5px 6px, #000 6px);
}
.drag-grip {
    width: 22px;
    background:
        radial-gradient(circle at 1px 1px, #fff 0 1px, transparent 1px) 2px 0 / 4px 4px,
        radial-gradient(circle at 2px 2px, #000 0 1px, transparent 1px) 2px 0 / 4px 4px,
        #99b4d1;
}

/* toolbars */
.toolbars {
    padding-bottom: 2px;
    background-color: #f0f0f0;
}
.toolbar-row {
    display: flex;
    gap: 1px;
    height: 32px;
}
.toolbar {
    position: relative;
    display: flex;
    align-items: center;
    padding: 0 3px 2px 11px;
    border: 1px solid #fff;
    border-right-color: #696969;
    border-bottom-color: #696969;
}
.toolbar::before {
    content: "";
    position: absolute;
    top: 1px;
    bottom: 1px;
    left: 2px;
    width: 3px;
    border: 1px solid #fff;
    border-right-color: #696969;
    border-bottom-color: #696969;
}
.toolbar.search {
    padding-right: 7px;
}
.tool {
    display: flex;
    align-items: center;
    justify-content: center;
    width: 22px;
    height: 22px;
}
.tool svg {
    width: 16px;
    height: 16px;
}
.tool.raised {
    width: 20px;
    height: 20px;
    margin: 0 3px;
    border: 1px solid #fff;
    border-right-color: #696969;
    border-bottom-color: #696969;
}
.tool.pressed {
    border-color: #a0a0a0 #fff #fff #a0a0a0;
    background-color: #fff;
}
.caret {
    display: flex;
    align-items: center;
    justify-content: center;
    width: 9px;
    height: 16px;
}
.caret::before {
    content: "";
    border: 3px solid transparent;
    border-top-color: #000;
    border-bottom: none;
}
.caret.small::before {
    border-width: 2px;
    border-bottom: none;
}
.sep {
    width: 12px;
    height: 16px;
    background: repeating-linear-gradient(#000 0 1px, transparent 1px 2px) center / 1px 16px no-repeat;
}
.run-length {
    width: 60px;
    height: 19px;
    margin-left: 3px;
    padding: 0 2px;
    border: 1px solid #808080;
    border-right-color: #fff;
    border-bottom-color: #fff;
    background-color: #fff;
    font-family: "Liberation Mono", monospace;
    font-size: 12px;
    text-align: right;
}
.spin {
    display: flex;
    flex-direction: column;
    margin: 0 5px 0 1px;
}
.spin button {
    width: 13px;
    height: 9px;
    padding-left: 2px;
    border: 1px solid #fff;
    border-right-color: #696969;
    border-bottom-color: #696969;
}
.spin svg {
    width: 8px;
    height: 7px;
}
.search-label {
    padding: 0 4px 0 5px;
    color: #808080;
    font-size: 12px;
}
.search-box {
    appearance: none;
    width: 135px;
    height: 19px;
    border: 1px solid #a0a0a0;
    border-right-color: #696969;
    border-bottom-color: #fff;
    border-radius: 0;
    background:
        conic-gradient(from -45deg at 50% 100%, #444 0 90deg, transparent 0) right 4px center / 10px 5px no-repeat,
        linear-gradient(#fff 0 0) right 16px center / 2px 100% no-repeat,
        #f0f0f0;
    opacity: 1;
}

/* panes */
.wave-grid {
    flex: 1;
    display: grid;
    grid-template-columns: 159px 101px 1fr 17px;
    grid-template-rows: 19px minmax(142px, 1fr) 74px 19px;
    gap: 2px;
    padding-right: 2px;
    border-top: 1px solid #a0a0a0;
    border-left: 1px solid #a0a0a0;
    background-color: #fff;
    color: #fff;
}
.cell {
    min-width: 0;
    border-right: 1px solid #a0a0a0;
    border-bottom: 1px solid #a0a0a0;
    background-color: #808080;
}
.black {
    contain: size;
    overflow: hidden;
    background-color: #000;
}
.black svg {
    width: 100%;
    height: 100%;
}
.names-head {
    display: flex;
    align-items: center;
    gap: 3px;
    padding-left: 10px;
}
.msgs-head {
    padding-right: 6px;
    text-align: right;
}
.names,
.values {
    padding-top: 2px;
}
.names {
    border-left: 8px solid #fff;
}
.names li {
    display: flex;
    align-items: center;
    gap: 5px;
    padding-left: 20px;
}
.names li svg {
    width: 14px;
    height: 14px;
}
.values li {
    padding-left: 2px;
}
.insert-line {
    display: flex;
    align-items: center;
    height: 4px;
    margin: 0 4px 0 2px;
    background: linear-gradient(#000 0 0) center / 100% 1px no-repeat;
}
.cursors {
    padding-left: 8px;
}
.now,
.cursor {
    display: flex;
    align-items: center;
    height: 17px;
}
.now {
    height: 22px;
}
.now svg,
.cursor svg {
    width: 12px;
    height: 12px;
}
.cursor .lock {
    width: 16px;
    height: 17px;
    background-color: #f00;
}
.now span,
.cursor span {
    flex: 1;
    padding-right: 9px;
    text-align: right;
}
.cursor.active span {
    background-color: #fff;
    color: #000;
}

/* scroll bars */
.hscroll {
    display: flex;
    color: #000;
    background-color: #f0f0f0;
    border-top: 1px solid #a0a0a0;
}
.hscroll button,
.vscroll button,
.thumb {
    border: 1px solid #fff;
    border-right: 2px solid #808080;
    border-bottom: 2px solid #808080;
    background-color: #f0f0f0;
}
.hscroll button,
.vscroll button {
    display: flex;
    align-items: center;
    justify-content: center;
    width: 16px;
}
.hscroll button svg,
.vscroll button svg {
    width: 8px;
    height: 8px;
}
.hscroll button:disabled {
    color: #808080;
}
.names-scroll {
    border-left: 8px solid #808080;
}
.track {
    flex: 1;
    background: repeating-conic-gradient(#fff 0 25%, #f0f0f0 0 50%) 0 0 / 2px 2px;
}
.wave-scroll {
    gap: 2px;
    padding: 0 1px;
}
.hscroll .thumb {
    flex: 1;
    overflow: hidden;
}
.thumb svg {
    width: 100%;
    height: 100%;
}
.vscroll {
    display: flex;
    flex-direction: column;
    gap: 1px;
    padding: 1px 0 2px 1px;
    background-color: #f0f0f0;
    color: #000;
}
.vscroll button {
    height: 15px;
}
.vscroll .thumb {
    flex: 1;
}

/* status */
.statusbar {
    display: flex;
    height: 20px;
    padding-top: 2px;
    background-color: #f0f0f0;
}
.status-range,
.status-text {
    border-top: 1px solid #a0a0a0;
    border-right: 1px solid #fff;
}
.status-range {
    width: 169px;
    padding: 0 5px;
}
.status-text {
    flex: 1;
    border-left: 1px solid #a0a0a0;
}
.size-grip {
    align-self: flex-end;
    margin-left: 4px;
}

/* drawing inside the panes */
.trace {
    fill: none;
    stroke: #0f0;
}
.unknown {
    stroke: #f00;
}
.grid-line {
    stroke: #808080;
}
.cursor-line {
    stroke: #f00;
}
.cursor-edge {
    stroke: #ff0;
}
.ruler-text {
    fill: #00e000;
    text-anchor: middle;
}
.cursor-box {
    fill: #000;
    stroke: #f00;
}
.cursor-text {
    fill: #e00000;
    text-anchor: middle;
}
.delta-text {
    fill: #fff;
    text-anchor: middle;
}
.delta-line {
    stroke: #fff;
}
```
FILE: wave.js
```javascript
const SCALE = 3.09;      // pixels per ns
const START = 2.3;
const END = 500;
const ROW = 17;
const HIGH = 4;
const LOW = 16;

const cursors = [
    { time: 80, width: 1 },
    { time: 84, width: 1 },
    { time: 100, width: 3 }
];

function xAt(t) {
    return Math.round(START + t * SCALE) + 0.5;
}

function draw(parent, tag, attrs, text) {
    const el = document.createElementNS('http://www.w3.org/2000/svg', tag);
    for (const key in attrs) {
        el.setAttribute(key, attrs[key]);
    }
    if (text) {
        el.textContent = text;
    }
    parent.appendChild(el);
}

function line(parent, cls, x1, y1, x2, y2, width) {
    draw(parent, 'line', { class: cls, x1: x1, y1: y1, x2: x2, y2: y2, 'stroke-width': width || 1 });
}

// list of [time, level] changes for a periodic signal
function clock(from, highFor, period, offset) {
    const edges = [];
    for (let t = from; t <= END; t++) {
        const phase = (t - offset + period * 100) % period;
        const level = phase < highFor ? 1 : 0;
        if (!edges.length || edges[edges.length - 1][1] !== level) {
            edges.push([t, level]);
        }
    }
    return edges;
}

const signals = [
    { from: 0, edges: clock(0, 10, 20, 0) },
    { from: 60, edges: clock(60, 5, 10, 0) },
    { from: 60, edges: clock(60, 20, 40, 80) },
    { from: 60, edges: clock(60, 10, 20, 65) },
    { from: 60, edges: clock(60, 4, 20, 0) },
    { from: 0, edges: [[0, 0], [60, 1]] }
];

function drawWaves() {
    const pane = document.getElementById('wavePane');
    for (let t = 20; t <= 520; t += 20) {
        line(pane, 'grid-line', xAt(t), 0, xAt(t), '100%');
    }
    line(pane, 'cursor-line', xAt(80), 0, xAt(80), '100%');
    line(pane, 'cursor-line', xAt(84), 0, xAt(84), '100%');
    line(pane, 'cursor-line', xAt(100), 0, xAt(100), '100%', 3);
    line(pane, 'grid-line', xAt(100), 0, xAt(100), '100%');

    signals.forEach((sig, i) => {
        const top = i * ROW + 0.5;
        const mid = top + 10;
        if (sig.from > 0) {
            line(pane, 'unknown', xAt(0), mid, xAt(sig.from), mid);
        }
        let d = `M${xAt(sig.from)} ${mid}`;
        sig.edges.forEach(([t, level]) => {
            d += `H${xAt(t)}V${top + (level ? HIGH : LOW)}`;
        });
        d += `H${xAt(END)}`;
        draw(pane, 'path', { class: 'trace', d: d });

        // edges that lie under a cursor
        sig.edges.forEach(([t]) => {
            if (t === 80) {
                line(pane, 'grid-line', xAt(t), top + HIGH, xAt(t), top + LOW);
            } else if (t === 84 || t === 100) {
                line(pane, 'cursor-edge', xAt(t), top + HIGH, xAt(t), top + LOW);
            }
        });
    });
}

function drawRuler() {
    const pane = document.getElementById('rulerPane');
    for (let t = 5; t <= 520; t += 5) {
        line(pane, 'trace', xAt(t), t % 25 ? 3 : 0, xAt(t), 7);
    }
    line(pane, 'cursor-line', xAt(80), 0, xAt(80), 22);
    line(pane, 'cursor-line', xAt(100), 0, xAt(100), 56, 3);
    line(pane, 'cursor-edge', xAt(100), 0, xAt(100), 7);
    // the first label stays inside the pane
    for (let t = 0; t <= END; t += 50) {
        draw(pane, 'text', { class: 'ruler-text', x: Math.max(xAt(t), 12), y: 20 }, `${t} ns`);
    }
    draw(pane, 'rect', { x: 0, y: 8, width: 3, height: 14 });
    for (let y = 22.5; y < 60; y += ROW) {
        line(pane, 'grid-line', 3, y, '100%', y);
    }
    cursors.forEach((c, i) => {
        const y = 23.5 + i * ROW;
        const half = c.time < 100 ? 15 : 18;
        draw(pane, 'rect', { class: 'cursor-box', x: xAt(c.time) - half, y: y, width: half * 2, height: 15 });
        draw(pane, 'text', { class: 'cursor-text', x: xAt(c.time), y: y + 12 }, `${c.time} ns`);
    });
    line(pane, 'cursor-line', xAt(84), 0, xAt(84), 39);
    draw(pane, 'text', { class: 'delta-text', x: 277, y: 36 }, '4 ns');
    draw(pane, 'text', { class: 'delta-text', x: 294, y: 53 }, '16 ns');
    line(pane, 'delta-line', 277, 48.5, 280, 48.5);
    line(pane, 'delta-line', 308, 48.5, 311, 48.5);
}

cursors.forEach(c => {
    const mark = Math.round(c.time * 3.04) - 3.5;
    line(document.getElementById('topPane'), 'cursor-line', xAt(c.time), 1, xAt(c.time), '100%', c.width);
    line(document.getElementById('scrollMarks'), 'cursor-line', mark, 0, mark, '100%');
});
drawWaves();
drawRuler();
```
